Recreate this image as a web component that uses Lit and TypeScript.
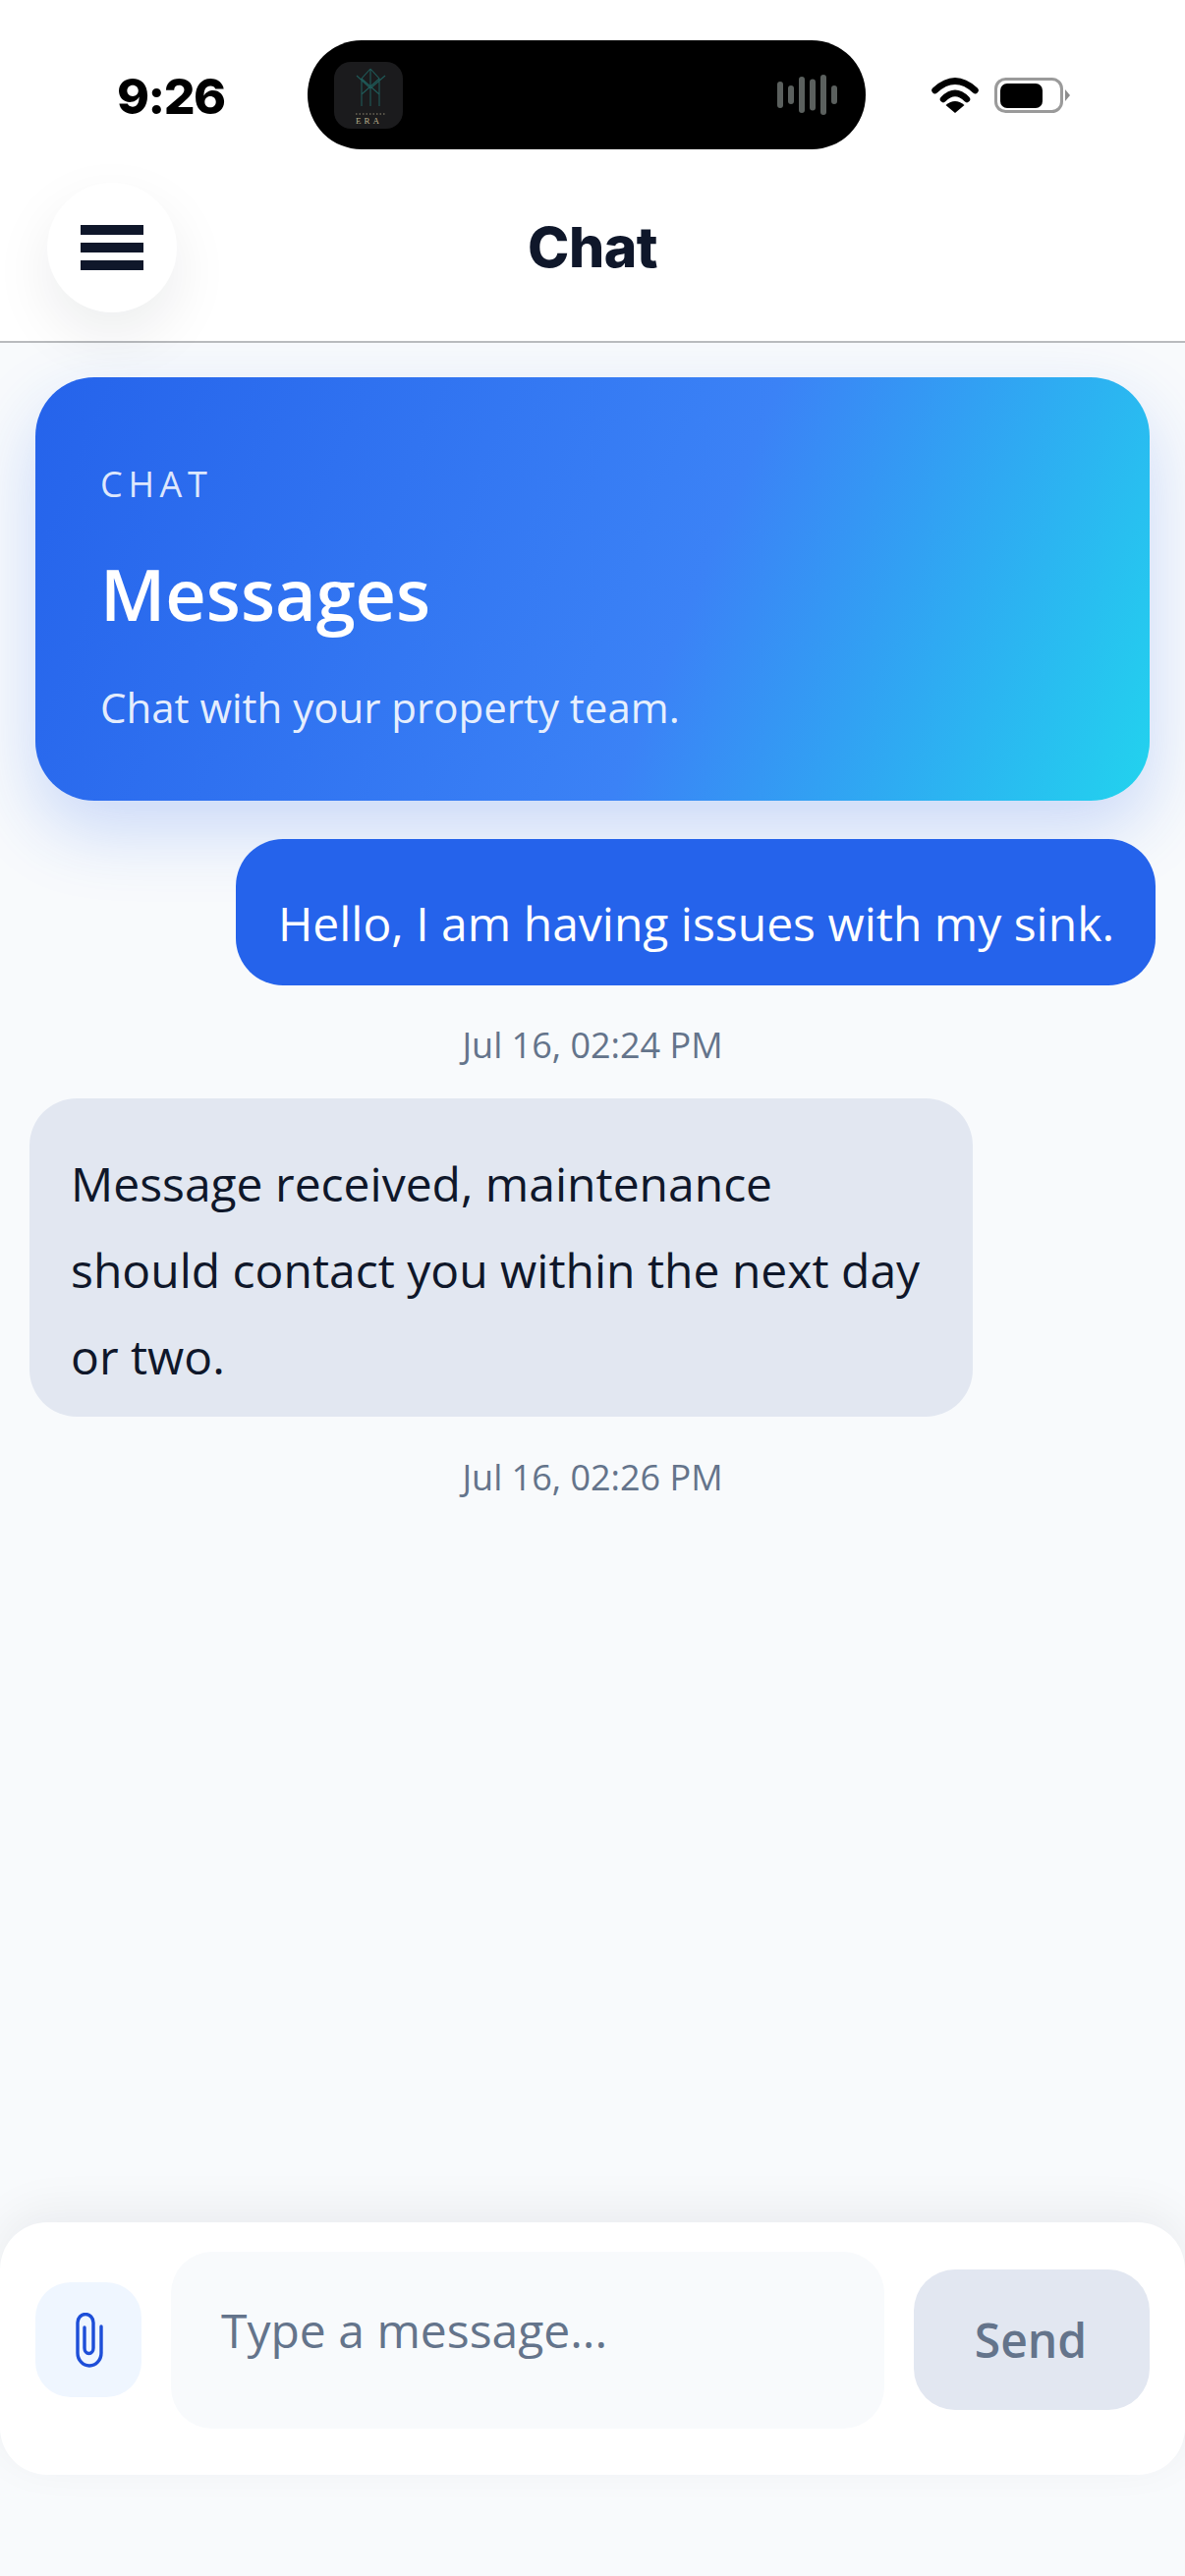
import { LitElement, html, css, svg } from "lit";
import { customElement } from "lit/decorators.js";

const bars: [number, number][] = [[0, 27], [11, 19], [22, 37], [33, 32], [44, 41], [55, 19]];

@customElement("app-root")
export class AppRoot extends LitElement {
  static styles = css`
    :host { display: block; width: 1206px; height: 2622px; overflow: hidden; background: #f8fafc; font-family: "Open Sans", "Noto Sans", sans-serif; }
    .page { height: 2622px; display: flex; flex-direction: column; }
    .top { background: #fff; border-bottom: 2px solid #b9bbbe; height: 347px; flex: none; box-sizing: content-box; position: relative; z-index: 1; }
    .status { height: 186px; display: grid; grid-template-columns: 313px 568px 1fr; }
    .time { font: 800 50px/1 Inter, "Liberation Sans", sans-serif; color: #000; padding: 73px 0 0 119px; letter-spacing: -1.500px; }
    .island { margin-top: 41px; height: 111px; background: #000; border-radius: 55px; display: flex; align-items: center; justify-content: space-between; padding: 0 29px 0 27px; box-sizing: border-box; }
    .app { width: 70px; height: 68px; display: block; }
    .wave { display: block; }
    .sys { display: flex; align-items: flex-start; gap: 16px; padding: 79px 0 0 67px; }
    .nav { height: 161px; display: flex; align-items: flex-start; position: relative; justify-content: center; }
    .menu { position: absolute; left: 48px; top: 0; width: 132px; height: 132px; border-radius: 50%; background: #fff; box-shadow: 0 24px 60px rgba(15, 23, 42, 0.08); display: flex; flex-direction: column; gap: 8px; align-items: center; justify-content: center; }
    .menu span { display: block; width: 64px; height: 10px; background: #0f172a; }
    .title { font: 800 57px/1 Inter, sans-serif; color: #0f172a; margin-top: 37px; letter-spacing: -0.5px; }
    .main { flex: 1; min-height: 0; display: flex; flex-direction: column; }
    .hero { margin: 35px 36px 0; height: 431px; box-sizing: border-box; border-radius: 60px; padding: 86px 66px 0; color: #fff; background: linear-gradient(112deg, #2563eb 0%, #3b82f6 58%, #22d3ee 100%); box-shadow: 0 30px 72px rgba(37, 99, 235, 0.22); flex: none; }
    .eyebrow { font-size: 36px; line-height: 46px; font-weight: 500; letter-spacing: 5.700px; color: rgba(255,255,255,0.86); }
    .h { font-size: 72px; line-height: 96px; font-weight: 600; margin-top: 40px; }
    .sub { font-size: 42px; line-height: 58px; color: rgba(255,255,255,0.9); margin-top: 39px; }
    .out { align-self: flex-end; margin: 39px 30px 0 0; background: #2563eb; color: #fff; font-size: 48px; line-height: 88px; padding: 42px 42px 0 43px; border-radius: 48px; white-space: nowrap; height: 149px; box-sizing: border-box; }
    .stamp { text-align: center; font-size: 36px; line-height: 50px; color: #64748b; margin-top: 36px; }
    .in { align-self: flex-start; width: 960px; box-sizing: border-box; margin: 29px 0 0 30px; background: #e2e7f1; color: #0f172a; font-size: 48px; line-height: 88px; padding: 43px 42px 17px; border-radius: 48px; }
    .in + .stamp { margin-top: 37px; }
    .composer { flex: none; height: 257px; box-sizing: border-box; margin-bottom: 103px; background: #fff; border-radius: 48px; box-shadow: 0 -12px 48px rgba(15, 23, 42, 0.06); display: flex; gap: 30px; padding: 30px 36px 0; align-items: flex-start; }
    .attach { width: 108px; height: 117px; margin-top: 31px; border-radius: 36px; background: #eff6ff; display: flex; align-items: center; justify-content: center; flex: none; padding-left: 2px; box-sizing: border-box; }
    .input { flex: 1; height: 180px; border-radius: 42px; background: #f8fafc; font-size: 48px; line-height: 66px; color: #64748b; padding: 47px 51px 0; box-sizing: border-box; }
    .send { width: 240px; height: 143px; margin-top: 18px; border-radius: 42px; background: #e2e7f1; color: #64748b; font-size: 48px; font-weight: 600; display: flex; align-items: center; justify-content: center; flex: none; padding-right: 2px; box-sizing: border-box; }
    .tiny { font: 400 9px "Liberation Serif", serif; letter-spacing: 3px; fill: #b9ae8c; }
  `;

  render() {
    return html`<div class="page">
      <div class="top">
        <div class="status">
          <div class="time">9:26</div>
          <div class="island">
            <svg class="app" viewBox="0 0 70 68">
              <rect width="70" height="68" rx="17" fill="#1b1b1d"/>
              <path d="M37 7 L46 17 V45 M37 7 L28 17 V45 M28 17 L46 33 M46 17 L28 33 M37 7 V45 M23 14 L37 27 L52 14" fill="none" stroke="#1f5a58" stroke-width="1.1"/>
              <path d="M22 53 H52" stroke="#6d6858" stroke-width="1.500" stroke-dasharray="1.500 2"/>
              <text class="tiny" x="22" y="63">ERA</text>
            </svg>
            <svg class="wave" width="61" height="41" viewBox="0 0 61 41">
              ${bars.map(([x, h]) => svg`<rect x=${x} y=${20.5 - h / 2} width="6" height=${h} rx="3" fill="#5b605e"/>`)}
            </svg>
          </div>
          <div class="sys">
            <svg width="48" height="36" viewBox="0 0 48 36">
              <path d="M3.500 13 Q24 -6 44.500 13" fill="none" stroke="#000" stroke-width="6.500" stroke-linecap="round"/>
              <path d="M12 22 Q24 10 36 22" fill="none" stroke="#000" stroke-width="6.500" stroke-linecap="round"/>
              <path d="M14.500 28 Q24 20 33.500 28 L24 36 Z" fill="#000"/>
            </svg>
            <svg width="78" height="36" viewBox="0 0 78 36">
              <rect x="1.500" y="1.500" width="67" height="33" rx="10" fill="#fff" stroke="#9a9a9a" stroke-width="3"/>
              <rect x="6" y="6" width="43" height="25" rx="7" fill="#000"/>
              <path d="M72 12 L77 18 L72 24 Z" fill="#8c8c8c"/>
            </svg>
          </div>
        </div>
        <div class="nav">
          <div class="menu"><span></span><span></span><span></span></div>
          <div class="title">Chat</div>
        </div>
      </div>
      <div class="main">
        <div class="hero">
          <div class="eyebrow">CHAT</div>
          <div class="h">Messages</div>
          <div class="sub">Chat with your property team.</div>
        </div>
        <div class="out">Hello, I am having issues with my sink.</div>
        <div class="stamp">Jul 16, 02:24 PM</div>
        <div class="in">Message received, maintenance should contact you within the next day or two.</div>
        <div class="stamp">Jul 16, 02:26 PM</div>
      </div>
      <div class="composer">
        <div class="attach">
          <svg width="28" height="56" viewBox="0 0 28 56">
            <path d="M26 14 V41 A12 13 0 0 1 2 41 V10 A8 8.500 0 0 1 18 10 V36 A4.500 5.500 0 0 1 9 36 V15" fill="none" stroke="#1d4ed8" stroke-width="3.400" stroke-linecap="round"/>
          </svg>
        </div>
        <div class="input">Type a message...</div>
        <div class="send">Send</div>
      </div>
    </div>`;
  }
}
